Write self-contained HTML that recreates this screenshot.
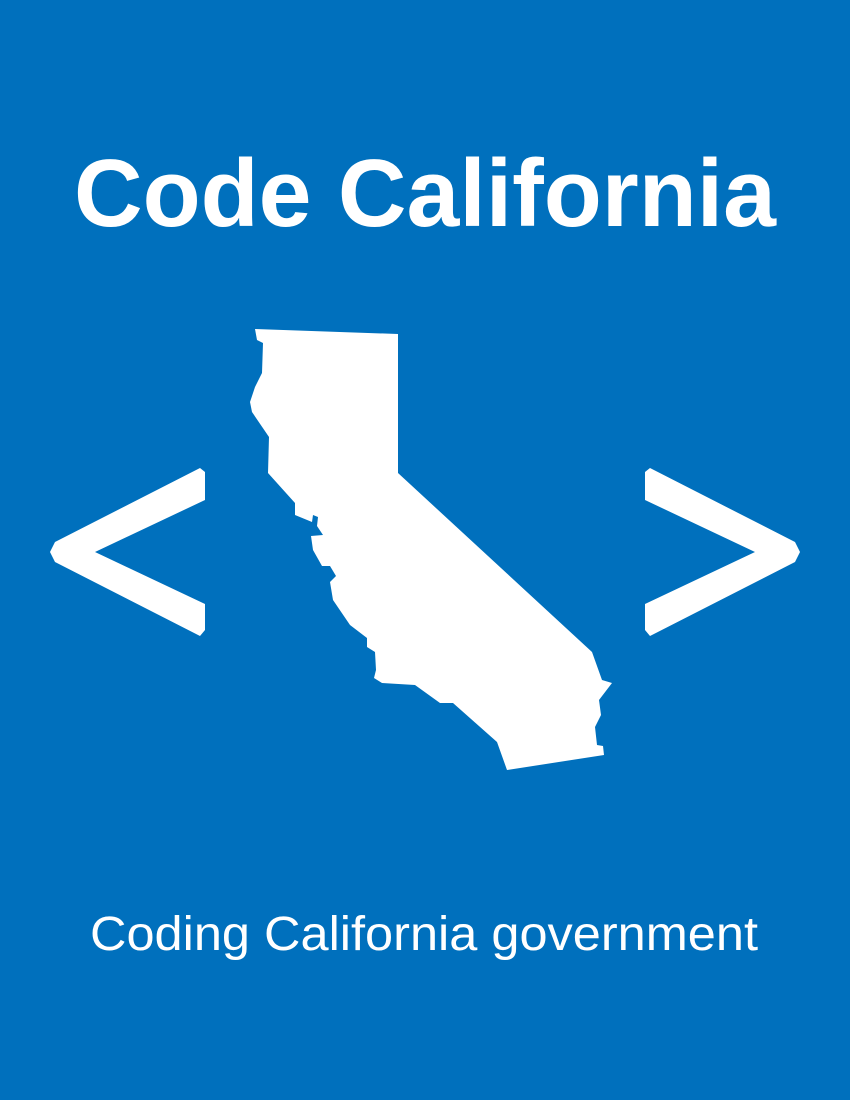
<!DOCTYPE html>
<html><head><meta charset="utf-8"><style>
html,body{margin:0;padding:0;width:850px;height:1100px;background:#0070bd;overflow:hidden}
svg{display:block}
</style></head><body>
<svg width="850" height="1100" viewBox="0 0 850 1100">
<rect width="850" height="1100" fill="#0070bd"/>
<text x="425" y="226" text-anchor="middle" font-family="Liberation Sans, sans-serif" font-weight="bold" font-size="96" fill="#fff" textLength="702" lengthAdjust="spacingAndGlyphs">Code California</text>
<polygon fill="#fff" points="200,468 205,472 205,500 95,552 205,604 205,630 200,636 55,562 50,552 55,542"/>
<polygon fill="#fff" points="650,468 645,472 645,500 755,552 645,604 645,630 650,636 795,562 800,552 795,542"/>
<polygon fill="#fff" points="255,329 398,334 398,473 592,652 602,680 612,683 599,700 601,715 595,727 597,745 603,746 604,755 507,770 497,742 453,703 440,703 415,685 382,683 374,678 376,670 375,652 367,647 367,638 350,625 333,600 330,582 336,576 330,566 322,566 313,550 311,536 323,535 317,526 318,517 313,515 312,522 295,515 295,503 268,473 269,437 252,412 250,402 255,387 262,373 263,343 257,340"/>
<text x="424" y="950" text-anchor="middle" font-family="Liberation Sans, sans-serif" font-size="48" fill="#fff" textLength="668" lengthAdjust="spacingAndGlyphs">Coding California government</text>
</svg>
</body></html>
